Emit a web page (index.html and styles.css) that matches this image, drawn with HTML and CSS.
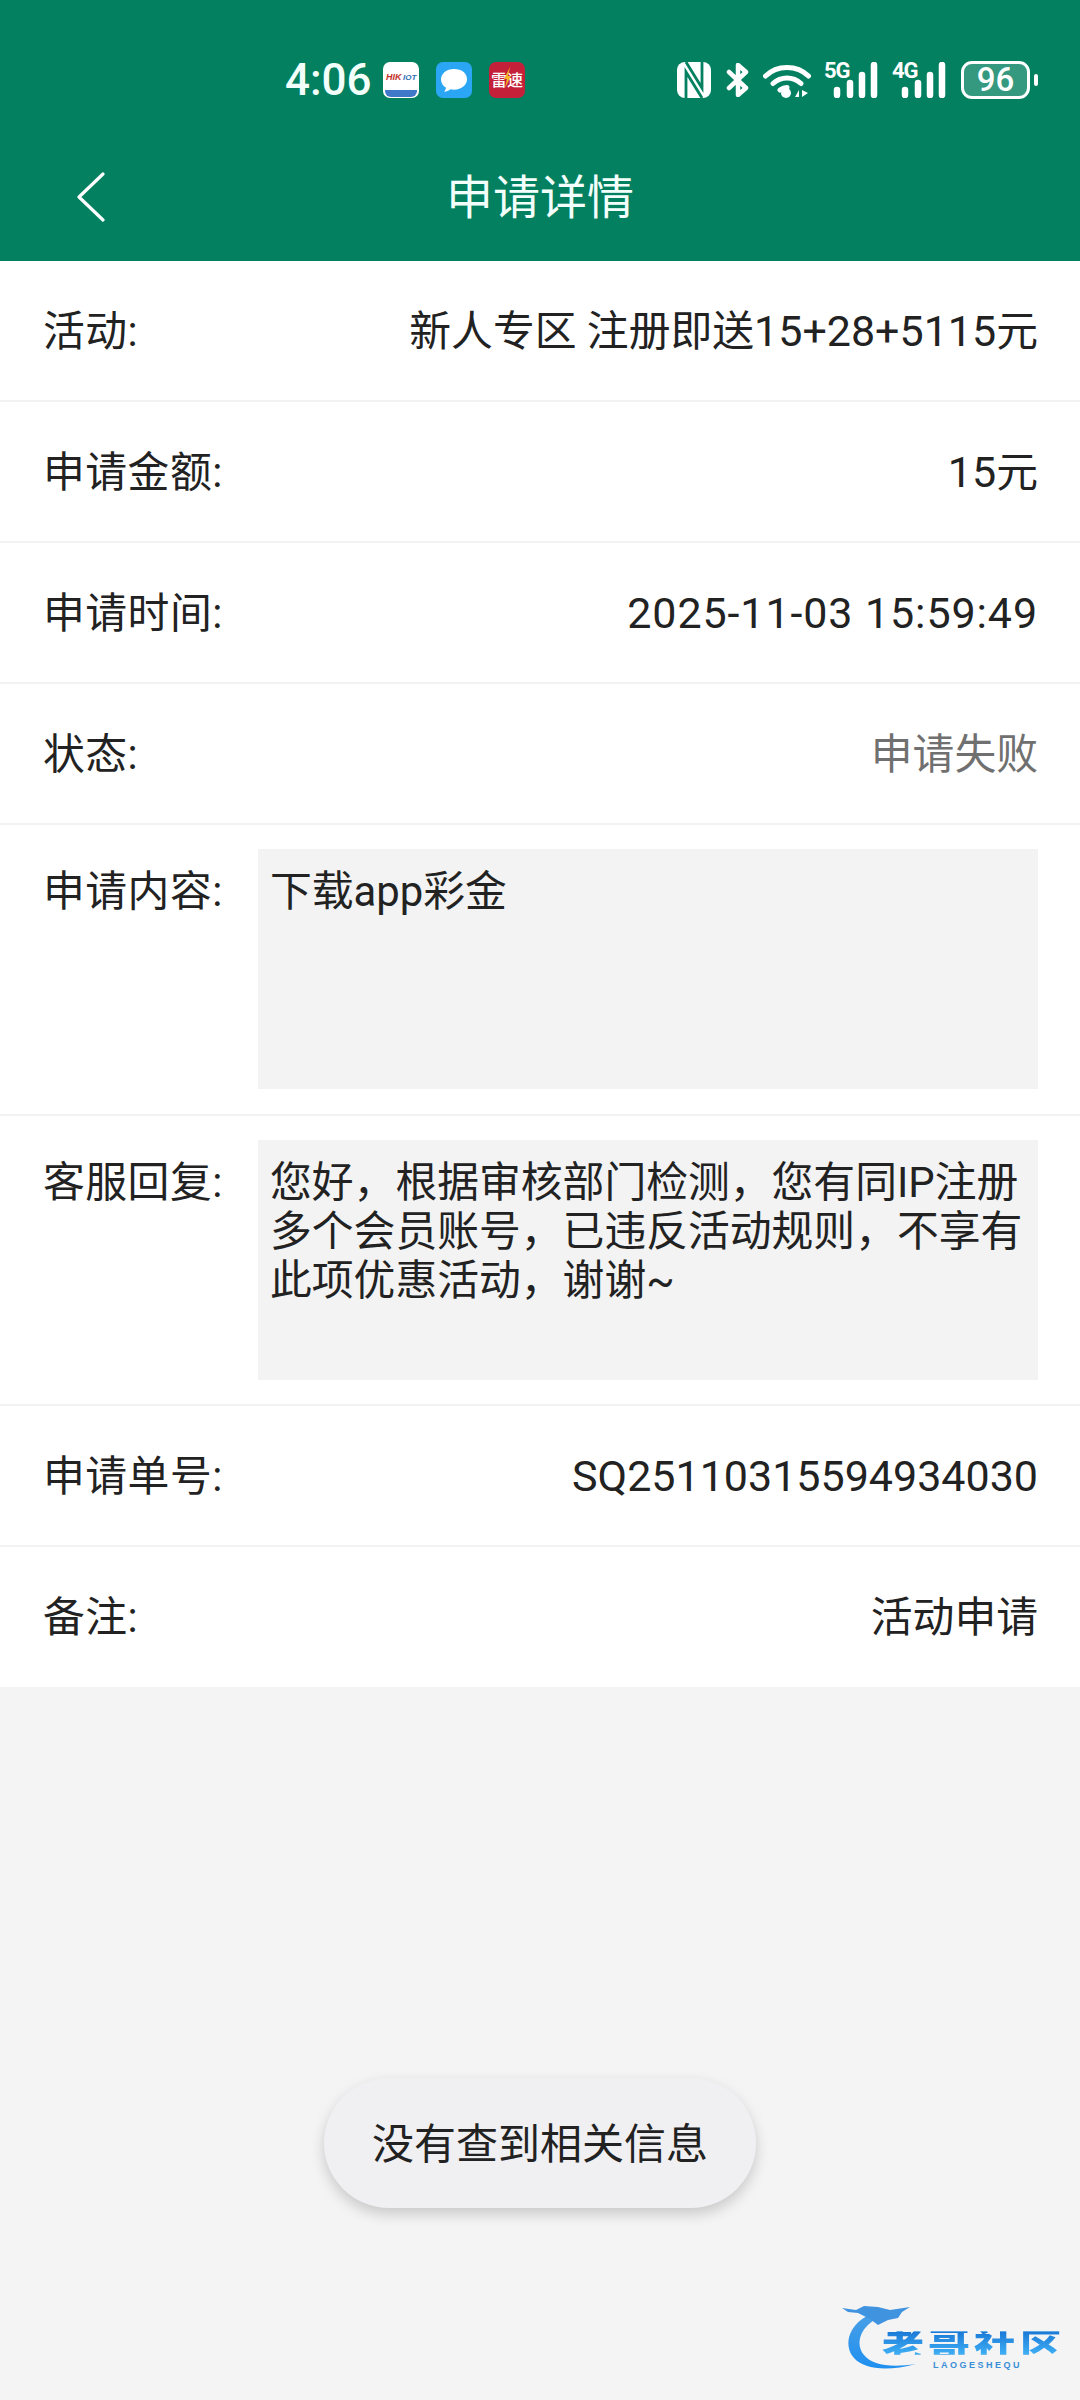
FILE: index.html
```html
<!DOCTYPE html>
<html lang="zh-CN">
<head>
<meta charset="utf-8">
<title>申请详情</title>
<link rel="stylesheet" href="styles.css">
</head>
<body>
<div class="page">
  <header class="header">
    <div class="status">
      <div class="status-left">
        <span class="time">4:06</span>
        <svg class="app" viewBox="0 0 36 36"><rect width="36" height="36" rx="7" fill="#fff"/><path d="M2 28h32v1a6 6 0 0 1-6 6H8a6 6 0 0 1-6-6z" fill="#3f78c9"/><text x="3" y="18" class="hik">HIK</text><text x="20" y="18" class="iot">IOT</text></svg>
        <svg class="app" viewBox="0 0 36 36"><rect width="36" height="36" rx="7" fill="#2aa6f5"/><path d="M18 7c-7.700 0-13 4.700-13 10.500 0 3.500 2 6.500 5 8.300-.3 1.600-1 3-2 4 2.500-.2 4.700-1.100 6.500-2.500 1.100.3 2.300.4 3.500.4 7.700 0 13-4.800 13-10.700S25.700 7 18 7z" fill="#fff"/></svg>
        <svg class="app" viewBox="0 0 36 36"><rect width="36" height="36" rx="7" fill="#c4203a"/><text x="2" y="24" class="lei">雷</text><text x="18" y="24" class="lei">速</text><path d="M21 5l-6 12h3l-2 9 6-12h-3z" fill="#f5b52a"/></svg>
      </div>
      <div class="status-right">
        <svg class="nfc" viewBox="0 0 34 36"><rect width="34" height="36" rx="8" fill="#fff"/><path d="M9 36V10l16 26M25 0v26L9 0" fill="none" stroke="#028060" stroke-width="2.800"/></svg>
        <svg class="bt" viewBox="0 0 24 34"><path d="M3 9l17 16-8 7V2l8 7L3 25" fill="none" stroke="#fff" stroke-width="4.500" stroke-linejoin="round" stroke-linecap="round"/></svg>
        <svg class="wifi" viewBox="0 0 48 36"><path d="M2.500 14C14 2.500 34 2.500 45.500 14M10 21.500c8-7.500 20-7.500 28 0M17 28c2-1.500 5-2.500 7-2.500" fill="none" stroke="#fff" stroke-width="5" stroke-linecap="round"/><circle cx="23" cy="31" r="5" fill="#fff"/><path d="M36 28l-4 7h4zM39 28v7l6-4z" fill="#fff"/></svg>
        <div class="signal"><span class="net">5G</span><svg class="bars" viewBox="0 0 46 36"><path d="M4 28v5M17 21v12M29 13v20M41 3v30" stroke="#fff" stroke-width="6.500" stroke-linecap="round"/></svg></div>
        <div class="signal"><span class="net">4G</span><svg class="bars" viewBox="0 0 46 36"><path d="M4 28v5M17 21v12M29 13v20M41 3v30" stroke="#fff" stroke-width="6.500" stroke-linecap="round"/></svg></div>
        <div class="battery"><span class="battery-body">96</span><span class="battery-nub"></span></div>
      </div>
    </div>
    <nav class="nav">
      <svg class="back" viewBox="0 0 30 50"><path d="M27 2L3 25l24 23" fill="none" stroke="#fff" stroke-width="3.200" stroke-linecap="round" stroke-linejoin="round"/></svg>
      <h1 class="title">申请详情</h1>
    </nav>
  </header>

  <main class="list">
    <div class="row"><span class="label">活动:</span><span class="value">新人专区 注册即送<span class="num">15+28+5115</span>元</span></div>
    <div class="row"><span class="label">申请金额:</span><span class="value"><span class="num">15</span>元</span></div>
    <div class="row"><span class="label">申请时间:</span><span class="value"><span class="num date">2025-11-03 15:59:49</span></span></div>
    <div class="row"><span class="label">状态:</span><span class="value muted">申请失败</span></div>
    <div class="row row-area row-tall"><span class="label">申请内容:</span><div class="area">下载app彩金</div></div>
    <div class="row row-area"><span class="label">客服回复:</span><div class="area">您好，根据审核部门检测，您有同IP注册多个会员账号，已违反活动规则，不享有此项优惠活动，谢谢~</div></div>
    <div class="row"><span class="label">申请单号:</span><span class="value"><span class="num">SQ25110315594934030</span></span></div>
    <div class="row last"><span class="label">备注:</span><span class="value">活动申请</span></div>
  </main>

  <div class="toast">没有查到相关信息</div>

  <div class="logo">
    <svg class="dragon" viewBox="0 0 80 70"><defs><linearGradient id="dg" x1="0" y1="0" x2="0" y2="1"><stop offset="0" stop-color="#4a9fe6"/><stop offset="1" stop-color="#1e90f0"/></linearGradient></defs><path d="M30 10C8 18 0 40 12 54c10 11 32 14 62 6-26 4-44 1-52-9C13 40 18 24 34 15z" fill="url(#dg)"/><path d="M0 4l14 2 8-4 14 1 12 3 20-3-8 5-4 6-10 2-10 5-8-6-12-6-10-1z" fill="#3f93df"/></svg>
    <span class="logo-name">老哥社区</span>
    <span class="logo-sub">LAOGESHEQU</span>
  </div>
</div>
</body>
</html>
```

FILE: styles.css
```css
* {
  box-sizing: border-box;
}

html,
body {
  margin: 0;
  padding: 0;
}

body {
  background: #f4f4f4;
  font-family: Roboto, "Noto Sans CJK SC", sans-serif;
  color: #222;
}

.page {
  position: relative;
  width: 1080px;
  height: 2400px;
  overflow: hidden;
}

.header {
  background: #028060;
  height: 261px;
  color: #fff;
}

.status {
  height: 116px;
  padding: 60px 42px 0 285px;
  display: flex;
  justify-content: space-between;
  align-items: flex-start;
}

.status-left {
  display: flex;
  align-items: center;
  height: 40px;
}

.time {
  font-size: 44px;
  font-weight: 500;
  width: 98px;
  color: #f2fffb;
}

.app {
  width: 36px;
  height: 36px;
  margin-right: 17px;
}

.hik {
  font: italic 900 9px "Liberation Sans", sans-serif;
  fill: #c0322a;
}

.iot {
  font: italic 700 8px "Liberation Sans", sans-serif;
  fill: #2f6db5;
}

.lei {
  font: 500 16px "Noto Sans CJK SC", sans-serif;
  fill: #fff;
}

.status-right {
  display: flex;
  align-items: center;
  height: 40px;
}

.nfc {
  width: 34px;
  height: 36px;
}

.bt {
  width: 24px;
  height: 34px;
  margin-left: 15px;
}

.wifi {
  width: 48px;
  height: 36px;
  margin-left: 13px;
}

.signal {
  position: relative;
  width: 55px;
  height: 36px;
  margin-left: 13px;
}

.net {
  position: absolute;
  left: 0;
  top: -3px;
  font: 700 22px/24px Roboto, sans-serif;
  letter-spacing: -1px;
  color: #fff;
}

.bars {
  position: absolute;
  left: 9px;
  top: 0;
  width: 46px;
  height: 36px;
}

.battery {
  display: flex;
  align-items: center;
  margin-left: 14px;
}

.battery-body {
  width: 69px;
  height: 38px;
  border: 3px solid #fff;
  border-radius: 11px;
  background: rgba(255, 255, 255, 0.2);
  font: 500 33px/32px Roboto, sans-serif;
  color: #fff;
  text-align: center;
}

.battery-nub {
  width: 4px;
  height: 12px;
  margin-left: 4px;
  background: #fff;
  border-radius: 2px;
}

.nav {
  position: relative;
  height: 145px;
  display: flex;
  align-items: center;
  justify-content: center;
  padding-top: 18px;
}

.back {
  position: absolute;
  left: 76px;
  top: 56px;
  width: 30px;
  height: 50px;
}

.title {
  margin: 0;
  font-size: 47px;
  font-weight: 400;
  line-height: 60px;
  color: #f2fffb;
}

.list {
  background: #fff;
}

.row {
  display: flex;
  justify-content: space-between;
  align-items: center;
  height: 141px;
  padding: 2px 42px 0 43px;
  border-bottom: 2px solid #f2f2f2;
  font-size: 41.800px;
  line-height: 50px;
}

.row.last {
  height: 140px;
  border-bottom: 0;
}

.row-area {
  height: 290px;
  align-items: flex-start;
  padding-top: 24px;
}

.row-tall {
  height: 291px;
}

.row-area .label {
  line-height: 49px;
  margin-top: 18px;
}

.label {
  letter-spacing: 0.500px;
}

.value {
  text-align: right;
}

.num {
  font-size: 43px;
}

.date {
  letter-spacing: 0.900px;
}

.muted {
  color: #707070;
}

.area {
  width: 780px;
  height: 240px;
  padding: 18px 12px 0;
  background: #f3f3f3;
  line-height: 49px;
  font-size: 41.800px;
}

.toast {
  position: absolute;
  left: 324px;
  top: 2078px;
  width: 432px;
  height: 130px;
  padding-top: 3px;
  border-radius: 65px;
  background: #f0f0f2;
  box-shadow: 0 6px 14px rgba(0, 0, 0, 0.18);
  display: flex;
  align-items: center;
  justify-content: center;
  font-size: 42px;
  line-height: 50px;
  color: #222;
}

.logo {
  position: absolute;
  left: 842px;
  top: 2304px;
  width: 225px;
  height: 70px;
}

.dragon {
  position: absolute;
  left: 0;
  top: 0;
  width: 80px;
  height: 70px;
}

.logo-name {
  position: absolute;
  left: 40px;
  top: 24px;
  font: 900 42px/30px "Noto Sans CJK SC", sans-serif;
  letter-spacing: 4px;
  white-space: nowrap;
  color: transparent;
  background: linear-gradient(#1a78d6, #3fb0f5);
  background-clip: text;
  -webkit-background-clip: text;
  transform: scaleY(0.78);
}

.logo-sub {
  position: absolute;
  left: 91px;
  top: 55px;
  font: 700 9px/12px "Liberation Sans", sans-serif;
  color: #3a8ed8;
  letter-spacing: 2.500px;
  white-space: nowrap;
}
```
